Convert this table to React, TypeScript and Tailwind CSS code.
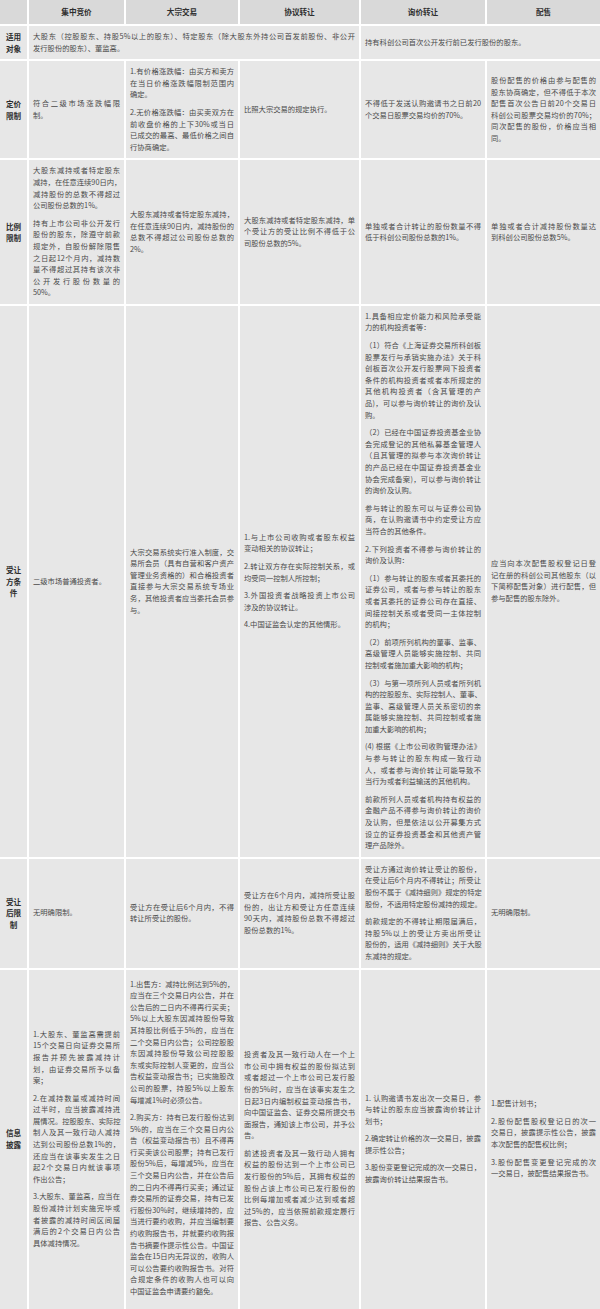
import React from "react";

function P({ lines }: { lines: string[] }) {
  return (
    <div>
      {lines.map((l, i) =>
        i < lines.length - 1 ? (
          <div key={i} className="w-max min-w-full [text-align-last:justify]">
            {l}
          </div>
        ) : (
          <div key={i} className="whitespace-nowrap">
            {l}
          </div>
        )
      )}
    </div>
  );
}

function Cell({ paras, span, pad }: { paras: string[][]; span?: string; pad?: string }) {
  return (
    <div
      className={`bg-[#e7e7e7] px-[4px] ${pad ?? "py-[5px]"} flex flex-col justify-center gap-[6px] text-[#4a4a4a] ${span ?? ""}`}
    >
      {paras.map((p, i) => (
        <P key={i} lines={p} />
      ))}
    </div>
  );
}

function Label({ lines }: { lines: string[] }) {
  return (
    <div className="bg-[#e7e7e7] flex flex-col items-center justify-center font-bold text-[#2e2e2e] text-[7.6px]">
      {lines.map((l, i) => (
        <div key={i}>{l}</div>
      ))}
    </div>
  );
}

function Head({ text }: { text: string }) {
  return (
    <div className="bg-[#d9d9d9] h-[24px] flex items-center justify-center font-bold text-[#2e2e2e] text-[7.6px]">
      {text}
    </div>
  );
}

export default function App() {
  return (
    <div className="w-[600px] bg-white [font-family:'Noto_Sans_CJK_SC','Noto_Sans',sans-serif] text-[7.3px] leading-[11.6px]">
      <div className="grid grid-cols-[27px_95px_112px_119px_124px_113px] gap-[2px] bg-white">
        {/* header */}
        <Head text="" />
        <Head text="集中竞价" />
        <Head text="大宗交易" />
        <Head text="协议转让" />
        <Head text="询价转让" />
        <Head text="配售" />

        {/* 适用对象 */}
        <Label lines={["适用", "对象"]} />
        <Cell
          span="col-span-3"
          paras={[
            [
              "大股东（控股股东、持股5%以上的股东）、特定股东（除大股东外持公司首发前股份、非公开",
              "发行股份的股东）、董监高。",
            ],
          ]}
        />
        <Cell span="col-span-2" paras={[["持有科创公司首次公开发行前已发行股份的股东。"]]} />

        {/* 定价限制 */}
        <Label lines={["定价", "限制"]} />
        <Cell paras={[["符合二级市场涨跌幅限", "制。"]]} />
        <Cell
          paras={[
            ["1.有价格涨跌幅：由买方和卖方", "在当日价格涨跌幅限制范围内", "确定。"],
            [
              "2.无价格涨跌幅：由买卖双方在",
              "前收盘价格的上下30%或当日",
              "已成交的最高、最低价格之间自",
              "行协商确定。",
            ],
          ]}
        />
        <Cell paras={[["比照大宗交易的规定执行。"]]} />
        <Cell paras={[["不得低于发送认购邀请书之日前20", "个交易日股票交易均价的70%。"]]} />
        <Cell
          paras={[
            [
              "股份配售的价格由参与配售的",
              "股东协商确定，但不得低于本次",
              "配售首次公告日前20个交易日",
              "科创公司股票交易均价的70%；",
              "同次配售的股份，价格应当相",
              "同。",
            ],
          ]}
        />

        {/* 比例限制 */}
        <Label lines={["比例", "限制"]} />
        <Cell
          paras={[
            ["大股东减持或者特定股东", "减持，在任意连续90日内，", "减持股份的总数不得超过", "公司股份总数的1%。"],
            [
              "持有上市公司非公开发行",
              "股份的股东，除遵守前款",
              "规定外，自股份解除限售",
              "之日起12个月内，减持数",
              "量不得超过其持有该次非",
              "公开发行股份数量的",
              "50%。",
            ],
          ]}
        />
        <Cell
          paras={[
            ["大股东减持或者特定股东减持，", "在任意连续90日内，减持股份的", "总数不得超过公司股份总数的", "2%。"],
          ]}
        />
        <Cell
          paras={[["大股东减持或者特定股东减持，单", "个受让方的受让比例不得低于公", "司股份总数的5%。"]]}
        />
        <Cell paras={[["单独或者合计转让的股份数量不得", "低于科创公司股份总数的1%。"]]} />
        <Cell paras={[["单独或者合计减持股份数量达", "到科创公司股份总数5%。"]]} />

        {/* 受让方条件 */}
        <Label lines={["受让", "方条", "件"]} />
        <Cell paras={[["二级市场普通投资者。"]]} />
        <Cell
          paras={[
            [
              "大宗交易系统实行准入制度，交",
              "易所会员（具有自营和客户资产",
              "管理业务资格的）和合格投资者",
              "直接参与大宗交易系统专场业",
              "务，其他投资者应当委托会员参",
              "与。",
            ],
          ]}
        />
        <Cell
          paras={[
            ["1.与上市公司收购或者股东权益", "变动相关的协议转让；"],
            ["2.转让双方存在实际控制关系，或", "均受同一控制人所控制；"],
            ["3.外国投资者战略投资上市公司", "涉及的协议转让。"],
            ["4.中国证监会认定的其他情形。"],
          ]}
        />
        <Cell
          paras={[
            ["1.具备相应定价能力和风险承受能", "力的机构投资者等："],
            [
              "（1）符合《上海证券交易所科创板",
              "股票发行与承销实施办法》关于科",
              "创板首次公开发行股票网下投资者",
              "条件的机构投资者或者本所规定的",
              "其他机构投资者（含其管理的产",
              "品)，可以参与询价转让的询价及认",
              "购。",
            ],
            [
              "（2）已经在中国证券投资基金业协",
              "会完成登记的其他私募基金管理人",
              "（且其管理的拟参与本次询价转让",
              "的产品已经在中国证券投资基金业",
              "协会完成备案)，可以参与询价转让",
              "的询价及认购。",
            ],
            ["参与转让的股东可以与证券公司协", "商，在认购邀请书中约定受让方应", "当符合的其他条件。"],
            ["2.下列投资者不得参与询价转让的", "询价及认购："],
            [
              "（1）参与转让的股东或者其委托的",
              "证券公司，或者与参与转让的股东",
              "或者其委托的证券公司存在直接、",
              "间接控制关系或者受同一主体控制",
              "的机构；",
            ],
            ["（2）前项所列机构的董事、监事、", "高级管理人员能够实施控制、共同", "控制或者施加重大影响的机构；"],
            [
              "（3）与第一项所列人员或者所列机",
              "构的控股股东、实际控制人、董事、",
              "监事、高级管理人员关系密切的亲",
              "属能够实施控制、共同控制或者施",
              "加重大影响的机构；",
            ],
            [
              "(4) 根据《上市公司收购管理办法》",
              "与参与转让的股东构成一致行动",
              "人，或者参与询价转让可能导致不",
              "当行为或者利益输送的其他机构。",
            ],
            [
              "前款所列人员或者机构持有权益的",
              "金融产品不得参与询价转让的询价",
              "及认购，但是依法以公开募集方式",
              "设立的证券投资基金和其他资产管",
              "理产品除外。",
            ],
          ]}
        />
        <Cell
          paras={[
            [
              "应当向本次配售股权登记日登",
              "记在册的科创公司其他股东（以",
              "下简称配售对象）进行配售，但",
              "参与配售的股东除外。",
            ],
          ]}
        />

        {/* 受让后限制 */}
        <Label lines={["受让", "后限", "制"]} />
        <Cell paras={[["无明确限制。"]]} />
        <Cell paras={[["受让方在受让后6个月内，不得", "转让所受让的股份。"]]} />
        <Cell
          paras={[
            [
              "受让方在6个月内，减持所受让股",
              "份的，出让方和受让方任意连续",
              "90天内，减持股份总数不得超过",
              "股份总数的1%。",
            ],
          ]}
        />
        <Cell
          paras={[
            [
              "受让方通过询价转让受让的股份，",
              "在受让后6个月内不得转让；所受让",
              "股份不属于《减持细则》规定的特定",
              "股份，不适用特定股份减持的规定。",
            ],
            [
              "前款规定的不得转让期限届满后，",
              "持股5%以上的受让方卖出所受让",
              "股份的，适用《减持细则》关于大股",
              "东减持的规定。",
            ],
          ]}
        />
        <Cell paras={[["无明确限制。"]]} />

        {/* 信息披露 */}
        <Label lines={["信息", "披露"]} />
        <Cell
          paras={[
            [
              "1.大股东、董监高需提前",
              "15个交易日向证券交易所",
              "报告并预先披露减持计",
              "划，由证券交易所予以备",
              "案；",
            ],
            [
              "2.在减持数量或减持时间",
              "过半时，应当披露减持进",
              "展情况。控股股东、实际控",
              "制人及其一致行动人减持",
              "达到公司股份总数1%的，",
              "还应当在该事实发生之日",
              "起2个交易日内就该事项",
              "作出公告；",
            ],
            [
              "3.大股东、董监高，应当在",
              "股份减持计划实施完毕或",
              "者披露的减持时间区间届",
              "满后的2个交易日内公告",
              "具体减持情况。",
            ],
          ]}
        />
        <Cell
          pad="pt-[9px] pb-[11px]"
          paras={[
            [
              "1.出售方：减持比例达到5%的，",
              "应当在三个交易日内公告，并在",
              "公告后的二日内不得再行买卖；",
              "5%以上大股东因减持股份导致",
              "其持股比例低于5%的，应当在",
              "二个交易日内公告；公司控股股",
              "东因减持股份导致公司控股股",
              "东或实际控制人变更的，应当公",
              "告权益变动报告书；已实施股改",
              "公司的股票，持股5%以上股东",
              "每增减1%时必须公告。",
            ],
            [
              "2.购买方：持有已发行股份达到",
              "5%的，应当在三个交易日内公",
              "告（权益变动报告书）且不得再",
              "行买卖该公司股票；持有已发行",
              "股份5%后，每增减5%，应当在",
              "三个交易日内公告，并在公告后",
              "的二日内不得再行买卖；通过证",
              "券交易所的证券交易，持有已发",
              "行股份30%时，继续增持的，应",
              "当进行要约收购，并应当编制要",
              "约收购报告书，并就要约收购报",
              "告书摘要作提示性公告。中国证",
              "监会在15日内无异议的，收购人",
              "可以公告要约收购报告书。对符",
              "合规定条件的收购人也可以向",
              "中国证监会申请要约豁免。",
            ],
          ]}
        />
        <Cell
          paras={[
            [
              "投资者及其一致行动人在一个上",
              "市公司中拥有权益的股份拟达到",
              "或者超过一个上市公司已发行股",
              "份的5%时，应当在该事实发生之",
              "日起3日内编制权益变动报告书，",
              "向中国证监会、证券交易所提交书",
              "面报告，通知该上市公司，并予公",
              "告。",
            ],
            [
              "前述投资者及其一致行动人拥有",
              "权益的股份达到一个上市公司已",
              "发行股份的5%后，其拥有权益的",
              "股份占该上市公司已发行股份的",
              "比例每增加或者减少达到或者超",
              "过5%的，应当依照前款规定履行",
              "报告、公告义务。",
            ],
          ]}
        />
        <Cell
          paras={[
            ["1. 认购邀请书发出次一交易日，参", "与转让的股东应当披露询价转让计", "划书；"],
            ["2.确定转让价格的次一交易日，披露", "提示性公告；"],
            ["3.股份变更登记完成的次一交易日，", "披露询价转让结果报告书。"],
          ]}
        />
        <Cell
          paras={[
            ["1.配售计划书；"],
            ["2.股份配售股权登记日的次一", "交易日，披露提示性公告，披露", "本次配售的配售权比例；"],
            ["3.股份配售变更登记完成的次", "一交易日，披配售结果报告书。"],
          ]}
        />
      </div>
    </div>
  );
}
